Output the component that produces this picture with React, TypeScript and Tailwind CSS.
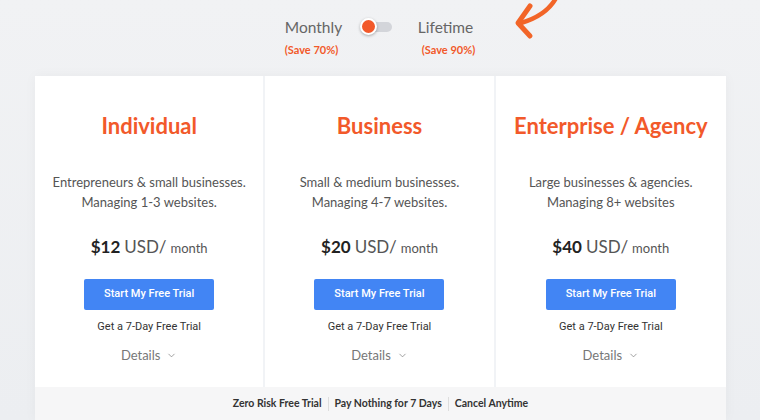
import { ChevronDown } from "lucide-react";

const plans = [
  { name: "Individual", line1: "Entrepreneurs & small businesses.", line2: "Managing 1-3 websites.", price: "$12" },
  { name: "Business", line1: "Small & medium businesses.", line2: "Managing 4-7 websites.", price: "$20" },
  { name: "Enterprise / Agency", line1: "Large businesses & agencies.", line2: "Managing 8+ websites", price: "$40" },
];

function PlanColumn({ plan, last }: { plan: (typeof plans)[number]; last: boolean }) {
  return (
    <div className={`flex flex-col items-center pt-[36px] ${last ? "" : "border-r-2 border-[#f1f3f6]"}`}>
      <h2 className="text-[22px] font-bold leading-[28px] text-[#f2592a]">{plan.name}</h2>
      <div className="mt-[32px] text-center text-[13px] leading-[20px] text-[#555]">
        <p>{plan.line1}</p>
        <p>{plan.line2}</p>
      </div>
      <div className="mt-[22px] flex items-baseline text-[#555]">
        <span className="text-[17px] font-bold text-[#222]">{plan.price}</span>
        <span className="ml-[4px] text-[17px]">USD/</span>
        <span className="ml-[4px] text-[13px]">month</span>
      </div>
      <button className="mt-[20px] h-[31px] w-[130px] rounded-[2px] bg-[#4285f4] font-['Roboto',sans-serif] text-[11px] font-medium text-white">
        Start My Free Trial
      </button>
      <p className="mt-[9px] font-['Roboto',sans-serif] text-[11px] text-[#333]">Get a 7-Day Free Trial</p>
      <div className="mt-[10px] flex items-center gap-[6px] text-[13px] text-[#777]">
        Details
        <ChevronDown size={11} strokeWidth={1.5} />
      </div>
    </div>
  );
}

export default function App() {
  return (
    <div className="relative flex h-[420px] w-[760px] flex-col items-center overflow-hidden bg-gradient-to-b from-[#f1f2f4] to-[#eceef1] font-['Lato',sans-serif]">
      <svg className="absolute left-[512px] top-0" width="52" height="42" viewBox="0 0 52 42" fill="none">
        <path d="M46 -6 C 40 8, 26 18, 9 23" stroke="#f26528" strokeWidth="4.5" strokeLinecap="round" />
        <path d="M18 6 L 6 23 L 18 36" stroke="#f26528" strokeWidth="5" strokeLinecap="round" strokeLinejoin="round" />
      </svg>

      <div className="mt-[17px] flex items-start">
        <div className="flex w-[58px] flex-col items-start">
          <span className="text-[15.5px] leading-[20px] text-[#666]">Monthly</span>
          <span className="mt-[5px] text-[11px] font-bold text-[#f2592a]">(Save 70%)</span>
        </div>
        <div className="ml-[19px] mt-[2px] flex h-[16px] w-[32px] items-center">
          <div className="relative h-[10px] w-[30px] rounded-full bg-[#d3d5da]">
            <div className="absolute -left-[2px] -top-[4px] h-[17px] w-[17px] rounded-full border-2 border-white bg-[#f2592a] shadow-[0_1px_3px_rgba(0,0,0,0.3)]" />
          </div>
        </div>
        <div className="ml-[24px] flex flex-col items-start">
          <span className="text-[15.5px] leading-[20px] text-[#666]">Lifetime</span>
          <span className="ml-[4px] mt-[5px] text-[11px] font-bold text-[#f2592a]">(Save 90%)</span>
        </div>
      </div>

      <div className="ml-[1px] mt-[17px] flex w-[691px] flex-1 flex-col bg-white shadow-[0_0_12px_rgba(0,0,0,0.04)]">
        <div className="grid flex-1 grid-cols-3">
          {plans.map((p, i) => (
            <PlanColumn key={p.name} plan={p} last={i === plans.length - 1} />
          ))}
        </div>
        <div className="flex h-[33px] items-center justify-center bg-[#f6f6f7] text-[10.5px] font-bold text-[#333]">
          <span className="pr-[6px]">Zero Risk Free Trial</span>
          <span className="h-[14px] w-px bg-[#ddd]" />
          <span className="px-[6px]">Pay Nothing for 7 Days</span>
          <span className="h-[14px] w-px bg-[#ddd]" />
          <span className="pl-[6px]">Cancel Anytime</span>
        </div>
      </div>
    </div>
  );
}
